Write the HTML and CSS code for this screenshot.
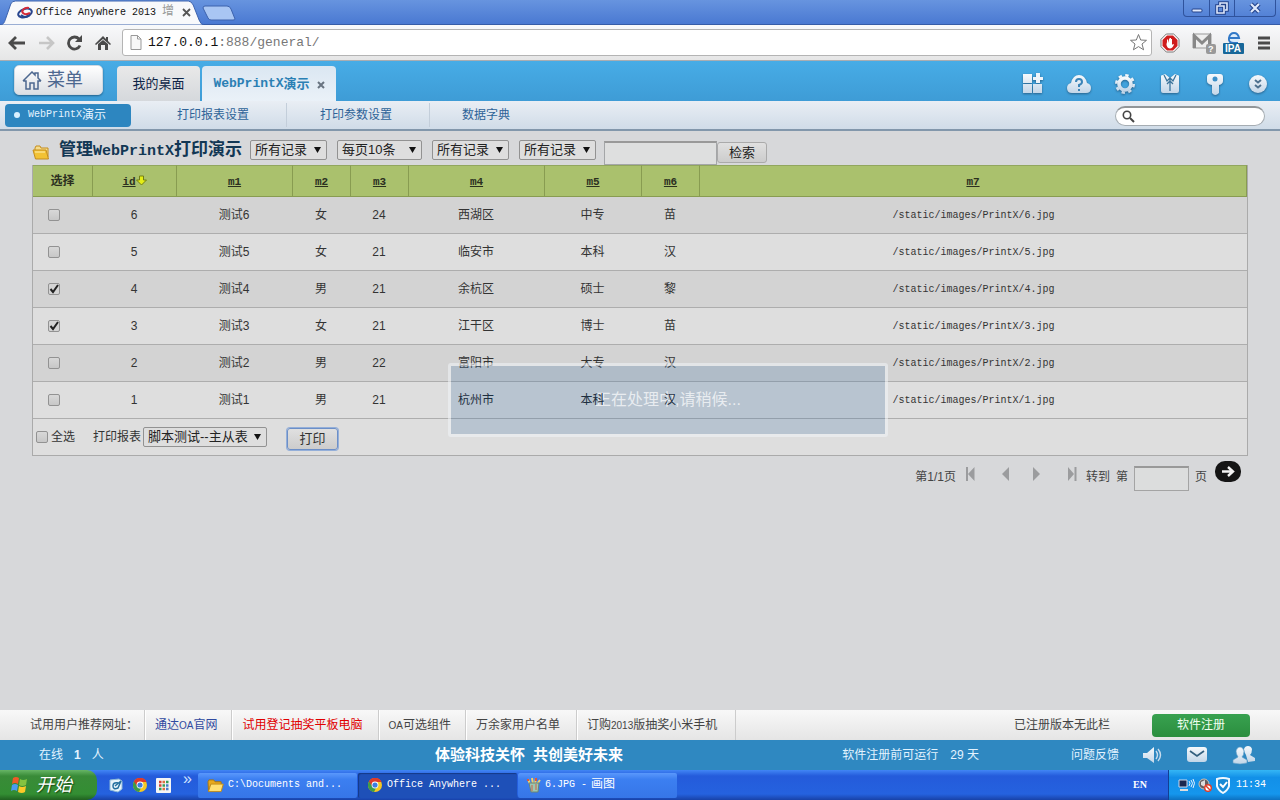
FILE: index.html
```html
<!DOCTYPE html>
<html lang="zh-CN">
<head>
<meta charset="utf-8">
<title>Office Anywhere 2013</title>
<link rel="stylesheet" href="styles.css">
</head>
<body>
<svg width="0" height="0" class="defs" aria-hidden="true">
  <defs>
    <linearGradient id="silver" x1="0" y1="0" x2="0" y2="1"><stop offset="0" stop-color="#f6f9fc"/><stop offset="1" stop-color="#c3d6e8"/></linearGradient>
    <symbol id="chrome" viewBox="0 0 16 16"><circle cx="8" cy="8" r="7" fill="#f4c823"/><path d="M8 8L2 4.4A7 7 0 0 1 14.4 5H8Z" fill="#dd3b2b"/><path d="M8 8L2 4.4A7 7 0 0 0 7 15L10 9Z" fill="#3d9c48"/><path d="M2 4.4A7 7 0 0 1 14.4 5H8L5 9Z" fill="#dd3b2b"/><circle cx="8" cy="8" r="3.4" fill="#fff"/><circle cx="8" cy="8" r="2.6" fill="#3c7de0"/></symbol>
    <symbol id="folder" viewBox="0 0 18 16"><path d="M1 4l1-2h5l1.500 2H15v3H4l-2.500 7z" fill="#e7a91d" stroke="#a8740e"/><path d="M4 6.500h13.300L15 14.500H1.500z" fill="#ffdf72" stroke="#c08a16"/></symbol>
    <symbol id="open-folder" viewBox="0 0 18 16"><path d="M3 6V4l1-2h4l1 2h7v9" fill="#f5dc8c" stroke="#c58d1c"/><path d="M1 6h13l2.500 9H3.500z" fill="#f2c234" stroke="#c58d1c"/><path d="M3 8h10" stroke="#fff0b0"/></symbol>
  </defs>
</svg>

<header class="titlebar">
  <div class="browser-tab">
    <svg class="tab-shape" viewBox="0 0 208 25" preserveAspectRatio="none"><path d="M0 25C4 25 5 21 6 18L11 4Q12 1 16 1H192Q195 1 197 5L203 20Q205 25 208 25Z" fill="#f8f9fb" stroke="#3c62ad"/></svg>
    <svg class="tab-icon" width="16" height="14" viewBox="0 0 16 14"><ellipse cx="8" cy="7" rx="7" ry="4" fill="none" stroke="#28468f" stroke-width="2" transform="rotate(-18 8 7)"/><path d="M12 2C7 1 4 5 6 7s5 1 7 0" fill="none" stroke="#d42b38" stroke-width="2"/><path d="M4 9q4 4 9 0" fill="none" stroke="#28468f" stroke-width="2"/></svg>
    <span class="tab-title mono">Office Anywhere 2013 <span class="fade">增</span></span>
    <svg class="tab-close" width="9" height="9" viewBox="0 0 9 9"><path d="M1 1l7 7M8 1L1 8" stroke="#555" stroke-width="1.800"/></svg>
  </div>
  <svg class="new-tab" width="34" height="17" viewBox="0 0 34 17"><path d="M3 1H25Q28 1 29 4L33 14Q33 15 31 15H9Q7 15 6 13L1 3Q1 1 3 1Z" fill="#a9c6f3" stroke="#3c62ad"/></svg>
  <div class="window-buttons">
    <button aria-label="最小化"><svg width="14" height="12" viewBox="0 0 14 12"><rect x="2" y="7" width="10" height="3" rx="1" fill="#dfe9fc" stroke="#24438b"/></svg></button>
    <button aria-label="还原"><svg width="14" height="14" viewBox="0 0 14 14"><path d="M5 4V2h7v7h-2M2 5h7v7H2z" fill="none" stroke="#24438b" stroke-width="3.600"/><path d="M5 4V2h7v7h-2M2 5h7v7H2z" fill="none" stroke="#dfe9fc" stroke-width="1.600"/></svg></button>
    <button class="wide" aria-label="关闭"><svg width="14" height="12" viewBox="0 0 14 12"><path d="M3 2l8 8M11 2l-8 8" stroke="#24438b" stroke-width="4.400"/><path d="M3 2l8 8M11 2l-8 8" stroke="#dfe9fc" stroke-width="2.200"/></svg></button>
  </div>
</header>

<div class="toolbar">
  <svg width="18" height="16" viewBox="0 0 18 16"><path d="M8 2L2 8l6 6M2.500 8H17" fill="none" stroke="#4a4a4a" stroke-width="2.800"/></svg>
  <svg width="18" height="16" viewBox="0 0 18 16"><path d="M10 2l6 6-6 6M15.500 8H2" fill="none" stroke="#c6c6c6" stroke-width="2.600"/></svg>
  <svg width="18" height="16" viewBox="0 0 18 16"><path d="M14 10.500A6 6 0 1 1 13 4" fill="none" stroke="#4a4a4a" stroke-width="2.800"/><path d="M16 0v7H9z" fill="#4a4a4a"/></svg>
  <svg width="16" height="16" viewBox="0 0 16 16"><path d="M0 9L8 1l3 3V2h2v4l3 3-1 1-7-6-7 6z" fill="#4a4a4a"/><path d="M3 9l5-4 5 4v6h-3v-5H6v5H3z" fill="#4a4a4a"/></svg>
  <label class="address">
    <svg width="12" height="15" viewBox="0 0 12 15"><path d="M1 .500h6.500L11 4v10.500H1zM7.500 .500V4H11" fill="#f8f8f8" stroke="#999"/></svg>
    <span class="url"><b>127.0.0.1</b>:888/general/</span>
    <svg width="19" height="19" viewBox="0 0 19 19"><path d="M9.500 1.500l2.200 5.500 5.800.300-4.500 3.700 1.600 5.800-5.100-3.200-5.100 3.200L6 11 1.500 7.300 7.300 7z" fill="#fff" stroke="#777"/></svg>
  </label>
  <div class="extensions">
    <svg width="20" height="20" viewBox="0 0 20 20"><path d="M6.300 1h7.400L19 6.300v7.400L13.700 19H6.300L1 13.700V6.300z" fill="#fff" stroke="#777"/><path d="M7 2.500h6L17.500 7v6L13 17.500H7L2.500 13V7z" fill="#cf1c1c"/><path d="M6.500 9v3q1 3.500 3.500 3.500t4-4l-1-.500-1 1V6h-1v4V5h-1v5V5.500H9V10L8 6.500H7V11z" fill="#fff"/></svg>
    <svg width="24" height="22" viewBox="0 0 24 22"><path d="M1 2h18v14H1z" fill="#eee" stroke="#999"/><path d="M2.500 16V4L10 11l7.500-7v12" fill="none" stroke="#888" stroke-width="3"/><rect x="14" y="12" width="10" height="10" rx="2" fill="#999"/><text x="16" y="20" class="badge-q">?</text></svg>
    <svg width="22" height="22" viewBox="0 0 22 22"><circle cx="11" cy="6" r="5.500" fill="#dcecfb"/><path d="M6 6h10Q15 1 11 1T6 6t5 5h4" fill="none" stroke="#3178c7" stroke-width="2"/><rect y="11" width="21" height="11" rx="1" fill="#176799"/><text x="2" y="20" class="badge-ipa">IPA</text></svg>
    <svg width="14" height="14" viewBox="0 0 14 14"><path d="M1 2h12M1 7h12M1 12h12" stroke="#4a4a4a" stroke-width="2.800"/></svg>
  </div>
</div>

<nav class="appbar">
  <button class="menu-button"><svg width="20" height="19" viewBox="0 0 20 19"><path d="M1 10L10 1l3 3V2h3v5l3 3M1 10h3v8h4v-6h4v6h4v-8h3" fill="none" stroke="#4d6890" stroke-width="1.500"/></svg>菜单</button>
  <a class="app-tab" href="#desk">我的桌面</a>
  <a class="app-tab current" href="#demo"><span class="latin">WebPrintX</span>演示<svg width="8" height="8" viewBox="0 0 8 8"><path d="M1 1l6 6M7 1L1 7" stroke="#697481" stroke-width="2"/></svg></a>
  <div class="app-icons">
    <button aria-label="应用"><svg width="24" height="24" viewBox="0 0 24 24"><path d="M2 2h9v9H2zM2 12h9v9H2zM12 12h9v9h-9z" fill="url(#silver)"/><path d="M15 1h4v4h3v3h-3v3h-4V8h-3V5h3z" fill="#eef4fa"/></svg></button>
    <button aria-label="帮助"><svg width="26" height="24" viewBox="0 0 26 24"><path d="M6 21Q1 21 1 16q0-4 4-5Q7 3 13 3t8 8q4 1 4 5 0 5-5 5z" fill="url(#silver)"/><path d="M10 10q0-3 3-3t3 3q0 2-3 3v2M13 17v2" fill="none" stroke="#3b84b8" stroke-width="2"/></svg></button>
    <button aria-label="设置"><svg width="24" height="24" viewBox="0 0 24 24"><circle cx="12" cy="12" r="8.700" fill="none" stroke="url(#silver)" stroke-width="2.600" stroke-dasharray="3.400 3.430"/><circle cx="12" cy="12" r="6" fill="none" stroke="url(#silver)" stroke-width="3.600"/></svg></button>
    <button aria-label="个性"><svg width="24" height="24" viewBox="0 0 24 24"><path d="M3 4q0-1 2-1l2-1 5 4 5-4 2 1q2 0 2 1v15q0 2-2 2H5q-2 0-2-2z" fill="url(#silver)"/><path d="M6 3l3 6 3-3 3 3 3-6M12 7v12M9 12l3-3 3 3" fill="none" stroke="#3b749c" stroke-width="1.300"/></svg></button>
    <button aria-label="密码"><svg width="24" height="24" viewBox="0 0 24 24"><path d="M7 2h10q3 0 3 3v4q0 3-4 4v8q-4 4-7 0v-8q-5-1-5-4V5q0-3 3-3z" fill="url(#silver)"/><circle cx="12" cy="7" r="2.500" fill="#3b8fc8"/></svg></button>
    <button aria-label="展开"><svg width="20" height="20" viewBox="0 0 20 20"><circle cx="10" cy="10" r="9" fill="url(#silver)"/><path d="M7 6l3 2.500L13 6M7 11l3 2.500 3-2.500" fill="none" stroke="#4d718f" stroke-width="2"/></svg></button>
  </div>
</nav>

<nav class="subnav">
  <a class="active" href="#demo"><span class="dot"></span><span class="latin">WebPrintX</span>演示</a>
  <a href="#report">打印报表设置</a>
  <a href="#params">打印参数设置</a>
  <a href="#dict">数据字典</a>
  <label class="search"><svg width="13" height="13" viewBox="0 0 13 13"><circle cx="5" cy="5" r="3.700" fill="none" stroke="#444" stroke-width="1.600"/><path d="M8 8l4 4" stroke="#444" stroke-width="2"/></svg><input type="text" aria-label="搜索"></label>
</nav>

<main>
  <form class="filters">
    <svg class="folder" width="18" height="16"><use href="#open-folder"/></svg>
    <h1>管理<span class="title-latin">WebPrintX</span>打印演示</h1>
    <select class="w77" aria-label="记录一"><option>所有记录</option></select>
    <select class="w85" aria-label="每页条数"><option>每页10条</option></select>
    <select class="w77" aria-label="记录二"><option>所有记录</option></select>
    <select class="w77 last" aria-label="记录三"><option>所有记录</option></select>
    <input class="keyword" type="text" aria-label="关键字"><button class="plain-button find" type="button">检索</button>
  </form>

  <table>
    <colgroup><col class="c60"><col class="c84"><col class="c116"><col class="c58"><col class="c58"><col class="c136"><col class="c97"><col class="c58"><col></colgroup>
    <thead><tr><th>选择</th><th><a href="#id">id</a><svg width="11" height="11" viewBox="0 0 11 11"><path d="M3.500 1h4v4h3l-5 5-5-5h3z" fill="#e4ee16" stroke="#727f14"/></svg></th><th><a href="#m1">m1</a></th><th><a href="#m2">m2</a></th><th><a href="#m3">m3</a></th><th><a href="#m4">m4</a></th><th><a href="#m5">m5</a></th><th><a href="#m6">m6</a></th><th><a href="#m7">m7</a></th></tr></thead>
    <tbody>
      <tr class="odd"><td><input type="checkbox" aria-label="选择 6"></td><td>6</td><td>测试6</td><td>女</td><td>24</td><td>西湖区</td><td>中专</td><td>苗</td><td class="path">/static/images/PrintX/6.jpg</td></tr>
      <tr><td><input type="checkbox" aria-label="选择 5"></td><td>5</td><td>测试5</td><td>女</td><td>21</td><td>临安市</td><td>本科</td><td>汉</td><td class="path">/static/images/PrintX/5.jpg</td></tr>
      <tr class="odd"><td><input type="checkbox" checked aria-label="选择 4"></td><td>4</td><td>测试4</td><td>男</td><td>21</td><td>余杭区</td><td>硕士</td><td>黎</td><td class="path">/static/images/PrintX/4.jpg</td></tr>
      <tr><td><input type="checkbox" checked aria-label="选择 3"></td><td>3</td><td>测试3</td><td>女</td><td>21</td><td>江干区</td><td>博士</td><td>苗</td><td class="path">/static/images/PrintX/3.jpg</td></tr>
      <tr class="odd"><td><input type="checkbox" aria-label="选择 2"></td><td>2</td><td>测试2</td><td>男</td><td>22</td><td>富阳市</td><td>大专</td><td>汉</td><td class="path">/static/images/PrintX/2.jpg</td></tr>
      <tr><td><input type="checkbox" aria-label="选择 1"></td><td>1</td><td>测试1</td><td>男</td><td>21</td><td><span class="above">杭州市</span></td><td><span class="above">本科</span></td><td><span class="above">汉</span></td><td class="path">/static/images/PrintX/1.jpg</td></tr>
    </tbody>
    <tfoot><tr><td colspan="9"><div class="actions">
      <label class="all"><input type="checkbox">全选</label>
      <label class="report">打印报表<select class="w124"><option>脚本测试--主从表</option></select></label>
      <button class="plain-button print" type="button">打印</button>
    </div></td></tr></tfoot>
  </table>

  <form class="pager">
    <span>第1/1页</span>
    <button type="button" aria-label="首页"><svg width="10" height="14" viewBox="0 0 10 14"><path d="M1 0h2v14H1zM9.500 0v14L3 7z"/></svg></button>
    <button type="button" aria-label="上一页"><svg width="10" height="14" viewBox="0 0 10 14"><path d="M8 0v14L1 7z"/></svg></button>
    <button type="button" aria-label="下一页"><svg width="10" height="14" viewBox="0 0 10 14"><path d="M2 0v14l7-7z"/></svg></button>
    <button type="button" aria-label="末页"><svg width="10" height="14" viewBox="0 0 10 14"><path d="M7.500 0h2v14h-2zM1 0v14l6-7z"/></svg></button>
    <label><span>转到</span><span>第</span><input type="text">页</label>
    <button class="go" type="button" aria-label="转到"><svg width="26" height="21" viewBox="0 0 26 21"><rect width="26" height="21" rx="10" fill="#151515"/><path d="M7 10.500h10M13 6l5 4.500-5 4.500" fill="none" stroke="#f4f4f4" stroke-width="2.400"/></svg></button>
  </form>

  <div class="loading" role="status">正在处理中,请稍候...</div>
</main>

<footer class="links">
  <span class="intro">试用用户推荐网址：</span>
  <a class="blue" href="#oa">通达<span class="num">OA</span>官网</a>
  <a class="red" href="#draw">试用登记抽奖平板电脑</a>
  <a href="#parts"><span class="num">OA</span>可选组件</a>
  <a href="#users">万余家用户名单</a>
  <a href="#order">订购<span class="num">2013</span>版抽奖小米手机</a>
  <span class="registered">已注册版本无此栏</span>
  <button class="register">软件注册</button>
</footer>

<div class="status">
  <div class="online"><span>在线</span><b>1</b><span>人</span></div>
  <div class="slogan"><span>体验科技关怀</span><span>共创美好未来</span></div>
  <div class="status-right">
    <span class="trial">软件注册前可运行<i>29 天</i></span><a href="#feedback">问题反馈</a>
    <svg width="20" height="18" viewBox="0 0 20 18"><path d="M1 7h4l7-6v16l-7-5H1z" fill="url(#silver)"/><path d="M14 5q3 4 0 8M16 3q5 6 0 12" fill="none" stroke="#c9dced" stroke-width="1.400"/></svg>
    <svg width="20" height="16" viewBox="0 0 20 16"><rect width="20" height="15" rx="3" fill="url(#silver)"/><path d="M3 4l7 5 7-5" fill="none" stroke="#34607f" stroke-width="1.800"/></svg>
    <svg width="24" height="20" viewBox="0 0 24 20"><path d="M14 10q-2-3-2-6 1-3 4-3t4 3q0 4-2 6l5 3v3l-7 1z" fill="url(#silver)"/><path d="M1 18v-3l5-3q-2-3-2-6 1-4 4-4t4 4q0 4-2 6l5 3v3q-7 2-14 0z" fill="url(#silver)" stroke="#5d9cc6" stroke-width=".600"/></svg>
  </div>
</div>

<div class="taskbar">
  <button class="start"><svg width="20" height="18" viewBox="0 0 20 18"><path d="M3 2q3-2 6 0L8 8q-3-2-6 0z" fill="#f05a28"/><path d="M10 3q3 2 7 0l-1 6q-4 2-7 0z" fill="#83c340"/><path d="M2 9q3-2 6 0l-1 6q-3-2-6 0z" fill="#4b9bf1"/><path d="M9 10q3 2 7 0l-1 6q-3 2-7 0z" fill="#fbc928"/></svg>开始</button>
  <div class="quick">
    <svg width="16" height="16" viewBox="0 0 16 16"><path d="M2 3l9-1 3 2v8l-4 3-8-2z" fill="#e8f4fa" stroke="#8bb9d8"/><path d="M10 6q-5-1-5 3t5 2l3-7-6 5" fill="none" stroke="#236f9e" stroke-width="1.500"/></svg>
    <svg width="16" height="16"><use href="#chrome"/></svg>
    <svg width="15" height="15" viewBox="0 0 15 15"><rect width="15" height="15" rx="1" fill="#f5f5f5"/><path d="M3 4h2.500M3 7.500h2.500" stroke="#d64132" stroke-width="2.500"/><path d="M6.500 4H9M6.500 11H9" stroke="#dc7041" stroke-width="2.500"/><path d="M10 4h2.500M6.500 7.500H9M3 11h2.500" stroke="#359c55" stroke-width="2.500"/><path d="M10 7.500h2.500M10 11h2.500" stroke="#477dcb" stroke-width="2.500"/></svg>
    <span class="more">»</span>
  </div>
  <button class="task mono"><svg width="17" height="15"><use href="#folder"/></svg>C:\Documents and...</button>
  <button class="task current mono"><svg width="16" height="16"><use href="#chrome"/></svg>Office Anywhere ...</button>
  <button class="task mono"><svg width="14" height="16" viewBox="0 0 14 16"><path d="M3 7L1 2M6 7L5 1M8 7l1-6M10 7l3-4" stroke="#f0d46a" stroke-width="2"/><path d="M1 2v2M9 1v3" stroke="#e3543a" stroke-width="2"/><path d="M2 6h10l-1 9H4z" fill="#9cc7b1" stroke="#6d8375"/><path d="M5 8v6M9 7v6" stroke="#ce6147"/></svg>6.JPG - <span class="cn">画图</span></button>
  <span class="lang">EN</span>
  <div class="tray">
    <svg width="17" height="14" viewBox="0 0 17 14"><path d="M1 2h8v7H1z" fill="#1b2850" stroke="#ced6ea"/><path d="M2 12h8" stroke="#ddd" stroke-width="2"/><path d="M11 3q2 2 0 5M13 2q3 3 0 7M15 1q3 4 0 9" fill="none" stroke="#e6f1ff"/></svg>
    <svg width="14" height="14" viewBox="0 0 14 14"><circle cx="6" cy="6" r="5" fill="#665e60" stroke="#cbc2b7"/><path d="M3 4l4-2v7L3 7z" fill="#ddd"/><circle cx="10" cy="10" r="3.300" fill="#fff" stroke="#e13e29" stroke-width="1.500"/><path d="M8 8l4 4" stroke="#e13e29" stroke-width="1.500"/></svg>
    <svg width="16" height="17" viewBox="0 0 16 17"><path d="M2 2q6-2 12 0v7q-1 4-6 7-5-3-6-7z" fill="#188ad5" stroke="#f0f8ff" stroke-width="2"/><path d="M5 7l3 3 4-5" fill="none" stroke="#fff" stroke-width="2"/></svg>
    <time>11:34</time>
  </div>
</div>
</body>
</html>
```

FILE: styles.css
```css
* { box-sizing: border-box; }
body {
  margin: 0;
  min-height: 100vh;
  display: flex;
  flex-direction: column;
  background: #d7d8da;
  color: #333;
  font: 12px/16px "Liberation Sans", "Noto Sans CJK SC", sans-serif;
}
button, input, select { font: inherit; color: inherit; margin: 0; }
button { padding: 0; border: 0; background: none; }
a { color: inherit; text-decoration: none; }
svg { display: block; flex: none; }
.defs { position: absolute; }
.mono { font: 10px/16px "Liberation Mono", "Noto Sans CJK SC", monospace; }
.latin { font: 10px/16px "Liberation Mono", monospace; }
.num { font-size: 10px; }

.titlebar {
  display: flex;
  align-items: flex-start;
  height: 25px;
  background: linear-gradient(#6794df, #4a79d2);
  border-bottom: 1px solid #365ca7;
}
.browser-tab {
  position: relative;
  display: flex;
  align-items: center;
  width: 204px;
  height: 25px;
  padding-left: 17px;
}
.tab-shape { position: absolute; left: 0; top: 0; width: 100%; height: 25px; }
.tab-icon, .tab-title, .tab-close { position: relative; }
.tab-title { margin-left: 3px; width: 142px; color: #111; white-space: nowrap; }
.fade { color: #999; font-size: 12px; }
.tab-close { margin-left: 4px; }
.new-tab { margin-top: 5px; margin-left: -2px; }
.window-buttons {
  display: flex;
  margin-left: auto;
  margin-right: 4px;
  border: 1px solid #2f539d;
  border-top: 0;
  border-radius: 0 0 4px 4px;
}
.window-buttons button {
  display: flex;
  align-items: center;
  justify-content: center;
  width: 25px;
  height: 16px;
}
.window-buttons button + button { border-left: 1px solid #2f539d; }
.window-buttons .wide { width: 41px; }

.toolbar {
  display: flex;
  align-items: center;
  gap: 11px;
  height: 36px;
  padding: 0 9px 0 8px;
  background: linear-gradient(#f8f9fb, #e6e6e6);
  border-bottom: 1px solid #a9adb2;
}
.address {
  display: flex;
  align-items: center;
  flex: 1;
  height: 27px;
  padding: 0 3px 0 7px;
  background: #fff;
  border: 1px solid #b4b4b4;
  border-radius: 3px;
}
.url { flex: 1; padding-left: 6px; color: #777; font: 13px/20px "Liberation Mono", monospace; }
.url b { color: #111; font-weight: normal; }
.extensions { display: flex; align-items: center; gap: 12px; margin-left: -3px; }
.extensions svg:nth-child(3) { margin-left: -5px; }
.badge-q { font: bold 9px "Liberation Sans", sans-serif; fill: #fff; }
.badge-ipa { font: bold 10px "Liberation Sans", sans-serif; fill: #fff; }

.appbar {
  display: flex;
  align-items: flex-end;
  height: 40px;
  padding: 0 12px 0 14px;
  background: linear-gradient(#47ace6, #3e9cd6);
}
.menu-button {
  display: flex;
  align-items: center;
  align-self: flex-start;
  gap: 5px;
  width: 89px;
  height: 30px;
  margin: 4px 14px 0 0;
  padding-left: 7px;
  color: #4d6890;
  font-size: 18px;
  line-height: 26px;
  background: linear-gradient(#fff, #dcdfe4);
  border: 1px solid #d0d8e0;
  border-radius: 5px;
  box-shadow: 0 1px 2px #24638d;
}
.app-tab {
  display: flex;
  align-items: center;
  justify-content: center;
  width: 83px;
  height: 35px;
  margin-right: 2px;
  color: #0e2547;
  font-size: 13px;
  background: linear-gradient(#e9e9e9, #d5d8dc);
  border-radius: 4px 4px 0 0;
}
.app-tab.current {
  width: 134px;
  color: #2b80b4;
  font-weight: bold;
  background: linear-gradient(#dbe7f2, #eaf1f8);
}
.app-tab .latin { font-size: 13px; font-weight: bold; }
.app-tab svg { margin: 2px 0 0 7px; }
.app-icons { display: flex; align-items: center; gap: 21px; height: 35px; margin-left: auto; }
.app-icons svg { filter: drop-shadow(0 1px 1px #27628c); }

.subnav {
  display: flex;
  align-items: center;
  height: 30px;
  padding: 0 15px 0 5px;
  color: #2e6398;
  background: linear-gradient(#e9eef4, #d0dce8);
  border-bottom: 2px solid #8297ab;
}
.subnav a { width: 143px; height: 24px; line-height: 24px; padding-right: 4px; text-align: center; }
.subnav a + a { border-right: 1px solid #c3ceda; }
.subnav a:nth-of-type(2) { margin-left: 13px; }
.subnav a:nth-of-type(4) { width: 116px; border: 0; }
.subnav .active {
  display: flex;
  align-items: center;
  width: 126px;
  height: 23px;
  padding-left: 9px;
  color: #e5f4ff;
  background: #2d86c0;
  border-radius: 4px;
}
.dot { width: 6px; height: 6px; margin-right: 8px; border-radius: 3px; background: #d9f0ff; }
.search {
  display: flex;
  align-items: center;
  width: 150px;
  height: 20px;
  margin-left: auto;
  margin-top: 2px;
  padding-left: 6px;
  background: #fff;
  border: 1px solid #a6adb3;
  border-top: 2px solid #929699;
  border-radius: 10px;
}
.search input { width: 120px; height: 16px; border: 0; background: none; }

main { position: relative; flex: 1; padding: 7px 32px 0; }
.filters { display: flex; align-items: flex-start; height: 27px; color: #222; }
.folder { margin-top: 6px; }
h1 { margin: 1px 9px 0 9px; width: 182px; color: #123754; font-size: 17px; line-height: 22px; white-space: nowrap; }
.title-latin { font: bold 15px/22px "Liberation Mono", monospace; }
select {
  appearance: none;
  height: 20px;
  padding: 0 0 0 4px;
  font-size: 13px;
  line-height: 18px;
  color: #222;
  background: #dedede url("data:image/svg+xml,%3Csvg xmlns='http://www.w3.org/2000/svg' width='8' height='7'%3E%3Cpath d='M0 0h7L3.500 6z' fill='%23111'/%3E%3C/svg%3E") no-repeat right 4px center;
  border: 1px solid #929292;
  border-radius: 2px;
}
.filters select { margin: 2px 10px 0 0; }
.filters .last { margin-right: 8px; }
.w77 { width: 77px; }
.w85 { width: 85px; }
.w124 { width: 124px; }
.keyword { width: 113px; height: 24px; margin-top: 3px; background: #dedfdf; border: 1px solid #a4a6a8; border-top: 2px solid #999; }
.plain-button {
  font-size: 13px;
  line-height: 18px;
  background: linear-gradient(#e0e0e0, #ccc);
  border: 1px solid #aaa;
  border-radius: 3px;
}
.find { width: 50px; height: 21px; margin-top: 4px; }

table { width: 100%; table-layout: fixed; border-collapse: separate; border-spacing: 0; text-align: center; border: 1px solid #aaa; border-top: 0; }
.c60 { width: 60px; }
.c84 { width: 84px; }
.c116 { width: 116px; }
.c58 { width: 58px; }
.c136 { width: 136px; }
.c97 { width: 97px; }
th, td { padding: 0; }
th { height: 32px; background: #aac16d; border-top: 1px solid #91a65e; border-right: 1px solid #889c51; border-bottom: 1px solid #889c51; color: #2b301f; }
th a { font: bold 11px/16px "Liberation Mono", monospace; text-decoration: underline; }
th svg { display: inline-block; vertical-align: -1px; }
td { height: 37px; padding: 0 2px 1px 0; background: #dedede; border-bottom: 1px solid #adadad; }
.odd td { background: #d3d3d3; }
tbody td:first-child { padding: 0 18px 1px 0; }
tbody td.path { padding: 1px 0 0; font: 10px/16px "Liberation Mono", monospace; }
.above { position: relative; z-index: 2; color: #1e2f40; }
input[type="checkbox"] {
  appearance: none;
  width: 12px;
  height: 12px;
  vertical-align: middle;
  background: linear-gradient(#d8d8d8, #c7c7c7);
  border: 1px solid #929292;
  border-radius: 2px;
}
input[type="checkbox"]:checked {
  background: #d4d4d4 url("data:image/svg+xml,%3Csvg xmlns='http://www.w3.org/2000/svg' width='10' height='10'%3E%3Cpath d='M1.500 5l2.500 3 5-7' fill='none' stroke='%23222' stroke-width='2'/%3E%3C/svg%3E") no-repeat center;
}
tfoot td { height: 36px; padding: 0; border-bottom: 0; }
.actions { display: flex; align-items: center; padding-left: 3px; }
.all, .report { display: flex; align-items: center; }
.all { gap: 3px; }
.report { gap: 2px; margin: 0 20px 0 18px; }
.print { width: 51px; height: 22px; margin-top: 4px; border: 1px solid #6c8fc8; box-shadow: 0 0 0 1px #94afd9; }

.pager { display: flex; align-items: center; justify-content: flex-end; height: 41px; padding-right: 7px; color: #444; }
.pager button { fill: #9b9c9e; margin-bottom: 5px; }
.pager button:nth-of-type(1) { margin-left: 9px; }
.pager button:nth-of-type(2) { margin-left: 26px; }
.pager button:nth-of-type(3) { margin-left: 20px; }
.pager button:nth-of-type(4) { margin-left: 26px; }
.pager label { display: flex; align-items: center; gap: 6px; margin-left: 9px; }
.pager input { width: 55px; height: 25px; margin: 4px 0 0; background: #dcdddd; border: 1px solid #a4a4a4; border-top: 2px solid #999; }
.pager .go { margin: 0 0 10px 8px; }
.loading {
  position: absolute;
  z-index: 1;
  top: 232px;
  left: 35%;
  width: 440px;
  height: 74px;
  color: rgba(255, 255, 255, .7);
  font-size: 16px;
  line-height: 68px;
  text-align: center;
  background: rgba(70, 118, 166, .25);
  background-clip: padding-box;
  border: 3px solid rgba(240, 244, 248, .55);
  border-radius: 3px;
}

.links { display: flex; align-items: center; height: 30px; padding: 0 30px; color: #444; background: linear-gradient(#f8f8f8, #e5e5e5); }
.links > a { height: 30px; padding: 0 10px; line-height: 31px; border-left: 1px solid #ccc; box-shadow: inset 1px 0 #fff; }
.intro { width: 114px; white-space: nowrap; }
.links .blue { color: #304aa0; padding-right: 14px; }
.links .red { color: #e00000; padding-right: 15px; }
.links > a:nth-of-type(3) { padding-right: 14px; }
.links > a:nth-of-type(4) { padding-right: 16px; }
.links > a:nth-of-type(5) { padding-right: 18px; border-right: 1px solid #ccc; }
.registered { margin-left: auto; }
.register { width: 98px; height: 23px; margin-left: 42px; color: #effff0; background: linear-gradient(#38a150, #2b8e3e); border-radius: 4px; }

.status { display: grid; grid-template-columns: 396px auto 1fr; align-items: center; height: 30px; padding: 0 24px 0 39px; color: #e3f3ff; background: #2f88c1; }
.online { display: flex; gap: 11px; }
.slogan { display: flex; gap: 8px; color: #fff; font-size: 15px; font-weight: bold; }
.status-right { display: flex; align-items: center; justify-content: flex-end; gap: 25px; }
.status-right a { margin-right: -2px; }
.trial { margin-right: 67px; }
.trial i { margin-left: 12px; font-style: normal; }

.taskbar { display: flex; align-items: center; height: 30px; color: #fff; background: linear-gradient(#4186f5, #245bdb 20%, #2562df 80%, #1842a8); }
.start {
  display: flex;
  align-items: center;
  gap: 6px;
  width: 97px;
  height: 30px;
  padding-left: 10px;
  font-size: 18px;
  font-style: italic;
  text-shadow: 1px 1px 1px #174d15;
  background: linear-gradient(#67b566, #398b38 20%, #338e33 80%, #206020);
  border-radius: 0 10px 10px 0;
}
.quick { display: flex; align-items: center; gap: 8px; width: 101px; padding-left: 11px; }
.more { margin: -12px 0 0 4px; font-size: 16px; color: #cfe2ff; }
.task {
  display: flex;
  align-items: center;
  gap: 4px;
  width: 159px;
  height: 25px;
  margin-right: 1px;
  padding-left: 9px;
  white-space: nowrap;
  background: linear-gradient(#5a98fc, #3c7ff1 25%, #3676e8);
  border-radius: 2px;
}
.task.current { background: #1e50b8; box-shadow: inset 1px 1px 1px #143987; }
.cn { font-size: 12px; }
.lang { margin: 0 21px 0 auto; font: bold 10px/16px "Liberation Serif", serif; }
.tray { display: flex; align-items: center; gap: 3px; width: 112px; height: 30px; padding-left: 9px; background: linear-gradient(#35b6f5, #1290e8 25%, #1596ed 80%, #0d71c1); border-left: 1px solid #123f94; }
time { margin-left: 2px; font: 10px/16px "Liberation Mono", monospace; }
```
